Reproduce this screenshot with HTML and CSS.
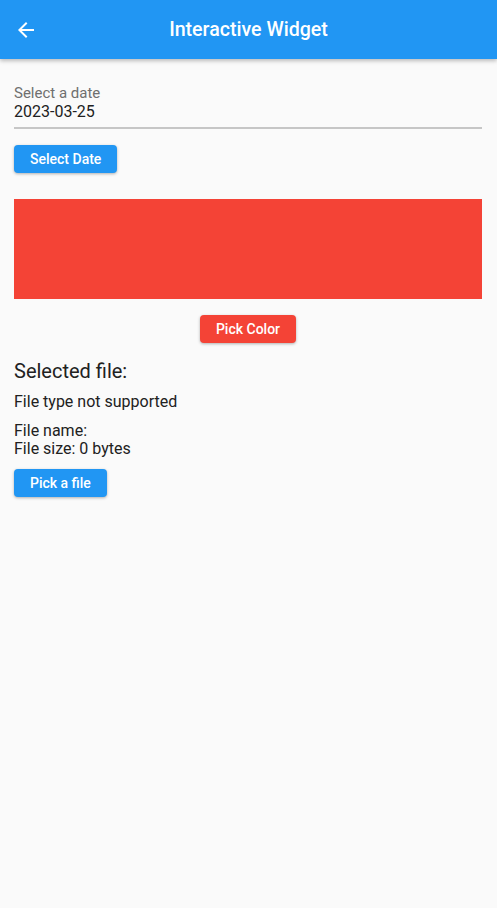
FILE: index.html
```html
<!DOCTYPE html>
<html lang="en">
<head>
<meta charset="utf-8">
<title>Interactive Widget</title>
<link rel="stylesheet" href="styles.css">
</head>
<body>
<header class="appbar">
  <div class="appbar-lead">
    <svg class="back-icon" viewBox="0 0 24 24" width="24" height="24" aria-hidden="true">
      <path d="M20 11H7.83l5.59-5.59L12 4l-8 8 8 8 1.41-1.41L7.83 13H20v-2z" fill="#ffffff"/>
    </svg>
  </div>
  <h1 class="appbar-title">Interactive Widget</h1>
  <div class="appbar-trail"></div>
</header>
<main class="content">
  <div class="field">
    <div class="field-label">Select a date</div>
    <div class="field-value">2023-03-25</div>
  </div>
  <div class="row-start btn-row-date">
    <button class="btn btn-blue">Select Date</button>
  </div>
  <div class="color-box"></div>
  <div class="row-center btn-row-color">
    <button class="btn btn-red">Pick Color</button>
  </div>
  <h2 class="section-title">Selected file:</h2>
  <p class="file-type">File type not supported</p>
  <p class="file-info">File name: <br>File size: 0 bytes</p>
  <div class="row-start btn-row-file">
    <button class="btn btn-blue">Pick a file</button>
  </div>
</main>
</body>
</html>
```

FILE: styles.css
```css
* { box-sizing: border-box; }
html, body { margin: 0; padding: 0; }
body {
  background: #fafafa;
  font-family: Roboto, "Noto Sans", "Liberation Sans", sans-serif;
  color: #212121;
  min-height: 908px;
}
.appbar {
  height: 59px;
  background: #2196f3;
  display: grid;
  grid-template-columns: 1fr auto 1fr;
  align-items: center;
  box-shadow: 0 2px 4px rgba(0, 0, 0, 0.25);
  position: relative;
  z-index: 1;
}
.appbar-lead {
  display: flex;
  align-items: center;
  padding-left: 14px;
}
.back-icon { display: block; }
.appbar-title {
  margin: 0;
  color: #ffffff;
  font-size: 19.6px;
  font-weight: 500;
  line-height: 24px;
}
.content {
  padding: 26px 15px 0 14px;
}
.field {
  padding-bottom: 6px;
  border-bottom: 2px solid #c6c6c6;
}
.field-label {
  font-size: 15px;
  line-height: 17px;
  color: #6f6f6f;
}
.field-value {
  font-size: 16px;
  line-height: 19px;
  color: #212121;
}
.row-start { display: flex; justify-content: flex-start; }
.row-center { display: flex; justify-content: center; }
.btn-row-date { margin-top: 16px; }
.btn-row-color { margin-top: 16px; }
.btn-row-file { margin-top: 11px; }
.btn {
  border: none;
  border-radius: 4px;
  height: 28px;
  padding: 0 16px;
  font-family: Roboto, "Noto Sans", "Liberation Sans", sans-serif;
  font-size: 14px;
  font-weight: 500;
  line-height: 28px;
  color: #ffffff;
  box-shadow: 0 1px 3px rgba(0, 0, 0, 0.3);
}
.btn-blue { background: #2196f3; }
.btn-red { background: #f44336; }
.color-box {
  margin-top: 26px;
  height: 100px;
  background: #f44336;
}
.section-title {
  margin: 16px 0 0;
  font-size: 20px;
  font-weight: 400;
  line-height: 24px;
  color: #212121;
}
.file-type {
  margin: 9px 0 0;
  font-size: 16px;
  line-height: 19px;
}
.file-info {
  margin: 11px 0 0;
  font-size: 16px;
  line-height: 18px;
}
```
